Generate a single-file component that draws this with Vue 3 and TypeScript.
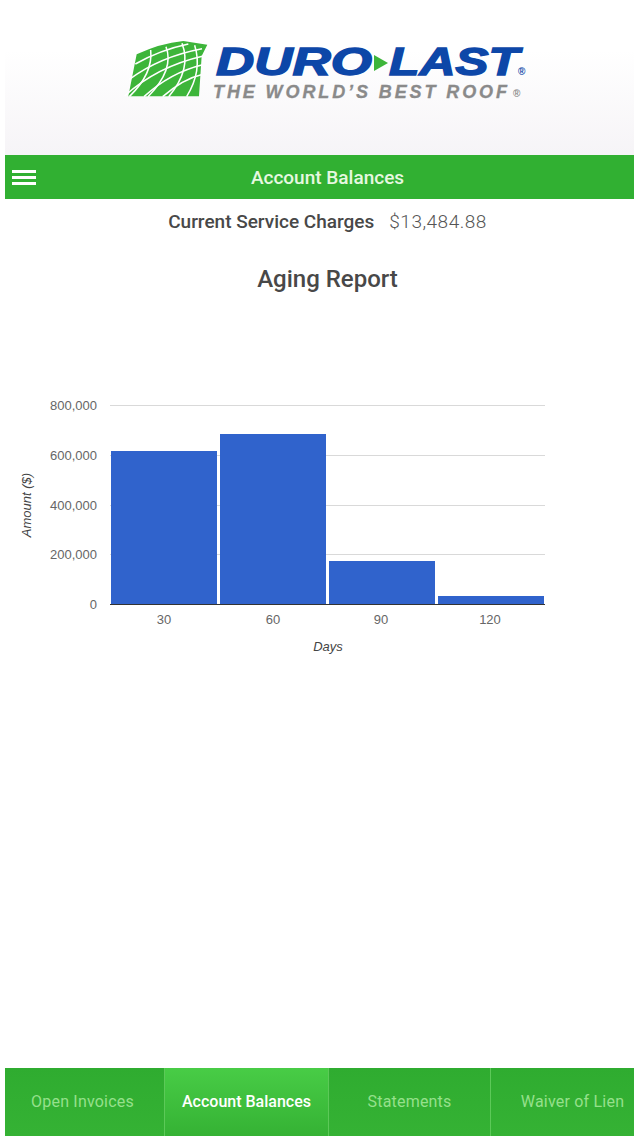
<script setup lang="ts">
const tabs = [
  { label: 'Open Invoices', width: 159, active: false },
  { label: 'Account Balances', width: 164, active: true },
  { label: 'Statements', width: 162, active: false },
  { label: 'Waiver of Lien', width: 144, active: false },
];

const gridLines = [
  { y: 405, label: '800,000' },
  { y: 455, label: '600,000' },
  { y: 505, label: '400,000' },
  { y: 554, label: '200,000' },
  { y: 604, label: '0' },
];

const bars = [
  { x: 111, top: 451, label: '30', labelX: 164 },
  { x: 220, top: 434, label: '60', labelX: 273 },
  { x: 329, top: 561, label: '90', labelX: 381 },
  { x: 438, top: 596, label: '120', labelX: 490 },
];

// globe strokes, in the coordinates of the globe group (3 units per pixel)
const globeLines = [
  'M46 84 Q120 42 205 24',
  'M28 130 Q120 62 246 38',
  'M14 180 Q110 92 250 60',
  'M72 182 Q150 110 248 86',
  'M128 182 Q190 128 244 116',
  'M92 42 Q100 112 28 182',
  'M138 32 Q164 100 84 182',
  'M186 22 Q216 100 146 182',
  'M224 28 Q248 104 200 182',
];
</script>

<template>
  <div class="page">
    <header class="brand">
      <svg class="logo" width="420" height="70" viewBox="120 36 420 70">
        <g transform="translate(120 36) scale(0.3333)">
          <path class="globe" d="M25 181 L50 55 Q120 22 190 15 L262 26 L245 60 L237 181 Z" />
          <path v-for="d in globeLines" :key="d" class="globe-line" :d="d" />
        </g>
        <text class="logo-name" x="216" y="75" textLength="156" lengthAdjust="spacingAndGlyphs">DURO</text>
        <polygon class="logo-arrow" points="374,55 388,63 374,71" />
        <text class="logo-name" x="389" y="75" textLength="130" lengthAdjust="spacingAndGlyphs">LAST</text>
        <text class="logo-mark" x="518" y="75">®</text>
        <text class="logo-tag" x="213" y="98" textLength="294">THE WORLD’S BEST ROOF</text>
        <text class="logo-mark logo-mark--grey" x="513" y="97">®</text>
      </svg>
    </header>

    <div class="title-bar">
      <button class="menu" aria-label="Menu"><span></span><span></span><span></span></button>
      <h1>Account Balances</h1>
    </div>

    <main class="content">
      <p class="charges"><strong>Current Service Charges</strong><span>$13,484.88</span></p>
      <h2>Aging Report</h2>

      <svg class="chart" width="639" height="290" viewBox="0 380 639 290">
        <g v-for="line in gridLines" :key="line.y">
          <line class="grid" x1="110" x2="545" :y1="line.y + 0.5" :y2="line.y + 0.5" />
          <text class="tick" x="97" :y="line.y + 5" text-anchor="end">{{ line.label }}</text>
        </g>
        <g v-for="bar in bars" :key="bar.label">
          <rect class="bar" :x="bar.x" :y="bar.top" width="106" :height="604 - bar.top" />
          <text class="tick" :x="bar.labelX" y="624" text-anchor="middle">{{ bar.label }}</text>
        </g>
        <line class="axis" x1="110" x2="545" y1="604.5" y2="604.5" />
        <text class="axis-title" x="328" y="651" text-anchor="middle">Days</text>
        <text class="axis-title" transform="translate(31 505) rotate(-90)" text-anchor="middle">Amount ($)</text>
      </svg>
    </main>

    <nav class="tabs">
      <a
        v-for="tab in tabs"
        :key="tab.label"
        class="tab"
        :class="{ 'tab--active': tab.active }"
        :style="{ width: tab.width + 'px' }"
      >{{ tab.label }}</a>
    </nav>
  </div>
</template>

<style>
html, body { margin: 0; background: #fff; }
</style>

<style scoped>
.page {
  height: 1136px;
  padding: 0 5px;
  box-sizing: border-box;
  display: flex;
  flex-direction: column;
  overflow: hidden;
  font-family: Roboto, "Liberation Sans", sans-serif;
  background: #fff;
}
.brand {
  height: 155px;
  flex: none;
  box-sizing: border-box;
  padding-top: 36px;
  background: linear-gradient(#fff 0, #fff 50px, #f6f4f7 100%);
}
.logo { display: block; margin-left: 115px; }
.globe { fill: #3db53a; }
.globe-line { fill: none; stroke: #fff; stroke-width: 4.6; }
.logo-name {
  font-family: "Liberation Sans", sans-serif;
  font-weight: 700;
  font-style: italic;
  font-size: 38px;
  fill: #0d47a8;
  stroke: #0d47a8;
  stroke-width: 1.4;
}
.logo-arrow { fill: #3db53a; }
.logo-mark { font-family: "Liberation Sans", sans-serif; font-size: 10px; font-weight: 700; fill: #0d47a8; }
.logo-mark--grey { fill: #8a8a8a; }
.logo-tag {
  font-family: "Liberation Sans", sans-serif;
  font-weight: 700;
  font-style: italic;
  font-size: 18px;
  fill: #8a8a8a;
  stroke: #8a8a8a;
  stroke-width: 0.3;
}
.title-bar {
  height: 44px;
  flex: none;
  background: #31b032;
  display: flex;
  align-items: center;
  justify-content: center;
  padding-left: 16px;
  position: relative;
}
.title-bar h1 {
  margin: 0;
  font-size: 19px;
  font-weight: 500;
  color: #e6f8e0;
}
.menu {
  position: absolute;
  left: 7px;
  top: 15px;
  width: 24px;
  padding: 0;
  border: 0;
  background: none;
  display: flex;
  flex-direction: column;
  gap: 3px;
}
.menu span { display: block; height: 3px; background: #fff; }
.content { flex: 1; text-align: center; padding-left: 16px; }
.charges {
  margin: 11px 0 0;
  height: 24px;
  line-height: 24px;
  font-size: 19px;
  color: #444;
  display: flex;
  justify-content: center;
  gap: 15px;
}
.charges strong { font-weight: 500; color: #484848; }
.charges span { font-weight: 300; color: #555; letter-spacing: 0.5px; }
.content h2 {
  margin: 29px 0 0;
  font-size: 24px;
  line-height: 32px;
  font-weight: 500;
  color: #484848;
}
.chart { display: block; margin: 85px 0 0 -21px; }
.grid { stroke: #d9d9d9; stroke-width: 1; }
.axis { stroke: #333; stroke-width: 1.2; }
.bar { fill: #3063cc; }
.tick { font-family: "Liberation Sans", sans-serif; font-size: 13px; fill: #666; }
.axis-title { font-family: "Liberation Sans", sans-serif; font-size: 13px; font-style: italic; fill: #444; }
.tabs {
  height: 68px;
  flex: none;
  display: flex;
  background: linear-gradient(#2fac30, #35b234);
}
.tab {
  box-sizing: border-box;
  flex: none;
  display: flex;
  align-items: center;
  justify-content: center;
  padding-bottom: 2px;
  font-size: 16px;
  letter-spacing: 0.2px;
  color: #96e08c;
  border-left: 1px solid #5cc958;
  white-space: nowrap;
}
.tab:first-child { border-left: 0; padding-right: 4px; }
.tab:last-child { padding-left: 20px; }
.tab--active {
  color: #fff;
  font-weight: 500;
  letter-spacing: 0;
  background: linear-gradient(#48cc46, #35b234);
}
</style>
